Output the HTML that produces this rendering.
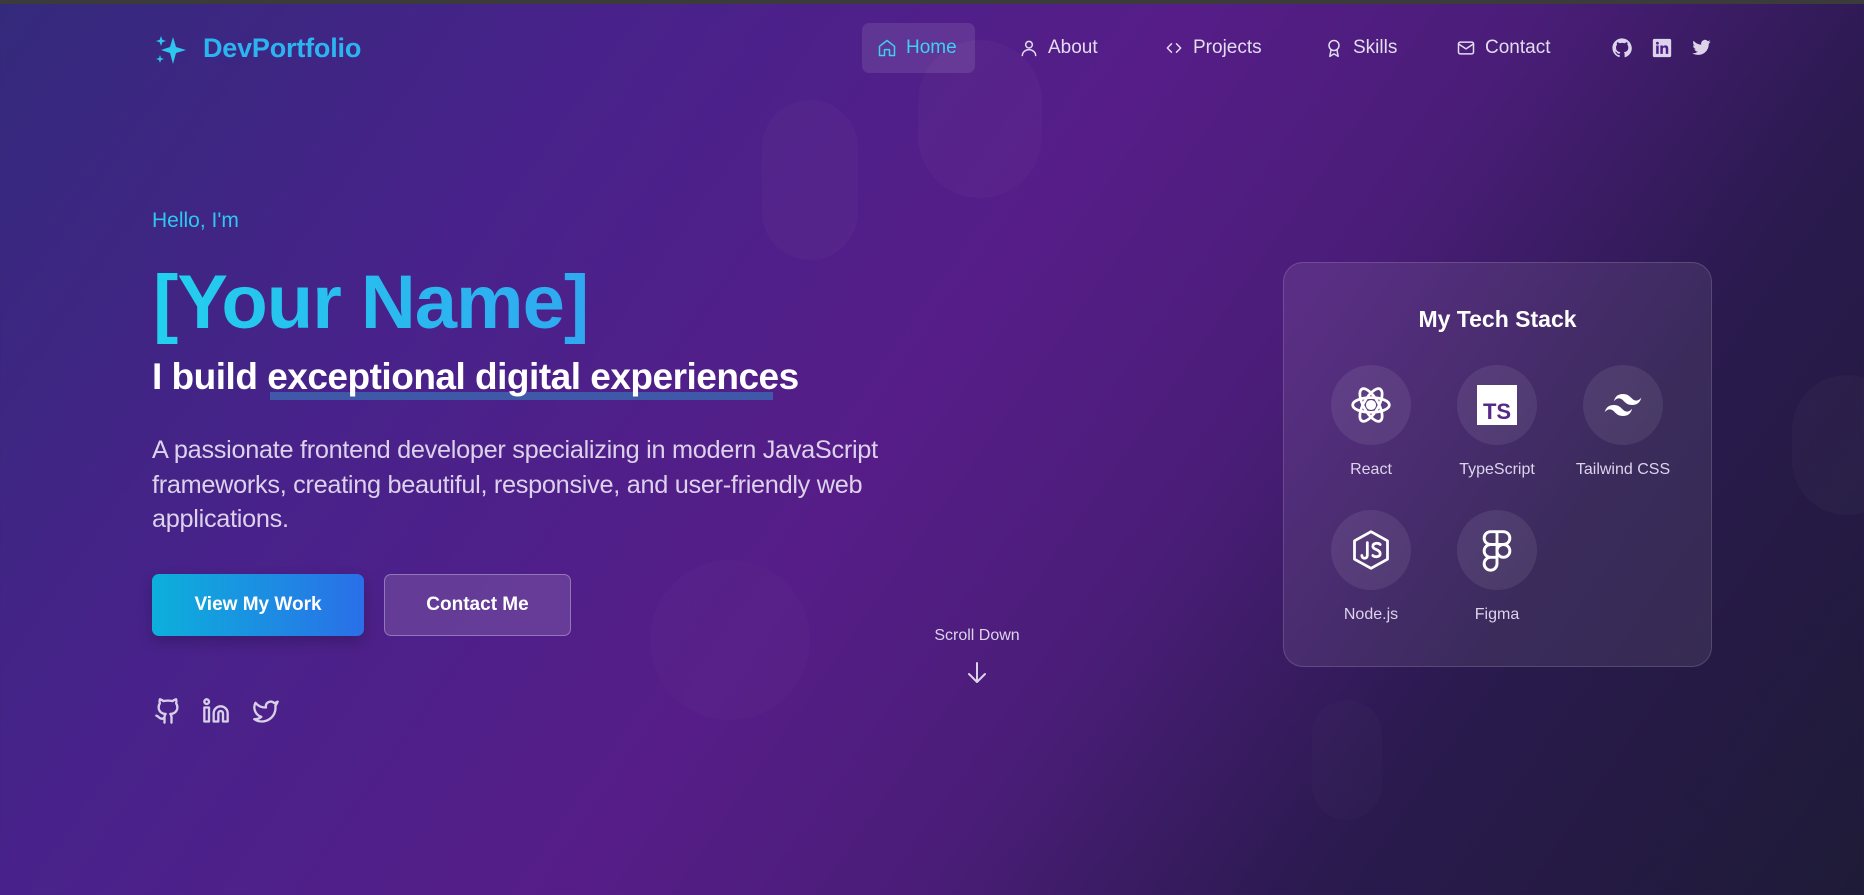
<!DOCTYPE html>
<html><head><meta charset="utf-8"><style>
*{margin:0;padding:0;box-sizing:border-box}
html,body{width:1864px;height:895px;overflow:hidden}
body{font-family:"Liberation Sans",sans-serif;position:relative;
background:linear-gradient(125deg,#342a7c 0%,#48228a 25%,#561d88 48%,#4a1d78 62%,#2a1a4e 78%,#1e1b37 100%);}
.topbar{position:absolute;left:0;top:0;width:100%;height:4px;background:#3b3b3b}
.blob{position:absolute;background:rgba(255,255,255,0.025);border-radius:999px}
.abs{position:absolute}
.nav{position:absolute;top:23px;height:50px;display:flex;align-items:center;color:#e2dcf0;font-size:19px;gap:9px}
.nav svg{width:20px;height:20px;fill:none;stroke:currentColor;stroke-width:1.8;stroke-linecap:round;stroke-linejoin:round}
.card{position:absolute;left:1283px;top:262px;width:429px;height:405px;border-radius:20px;background:rgba(255,255,255,0.08);border:1px solid rgba(255,255,255,0.14)}
.circ{position:absolute;width:80px;height:80px;border-radius:50%;background:rgba(255,255,255,0.08);display:flex;align-items:center;justify-content:center}
.circ svg{width:44px;height:44px;fill:none;stroke:#fff;stroke-width:2;stroke-linecap:round;stroke-linejoin:round}
.lbl{position:absolute;width:140px;text-align:center;color:#ddd4ec;font-size:16px}
.soc svg{width:28px;height:28px;fill:none;stroke:#d8d0e8;stroke-width:2;stroke-linecap:round;stroke-linejoin:round}
</style></head><body>
<div class="topbar"></div>
<div class="blob" style="left:762px;top:100px;width:96px;height:160px"></div>
<div class="blob" style="left:918px;top:40px;width:124px;height:158px"></div>
<div class="blob" style="left:1792px;top:375px;width:110px;height:140px"></div>
<div class="blob" style="left:650px;top:560px;width:160px;height:160px;background:rgba(255,255,255,0.015)"></div>
<div class="blob" style="left:1312px;top:700px;width:70px;height:120px;background:rgba(255,255,255,0.015)"></div>

<svg class="abs" style="left:155px;top:34px" width="32" height="32" viewBox="0 0 32 32"><path fill="#2ec5ef" d="M18 3 L21 13 L31 16 L21 19 L18 30 L15 19 L6 16 L15 13Z"/><path fill="#2ec5ef" d="M6 2 L7.3 5.7 L11 7 L7.3 8.3 L6 12 L4.7 8.3 L1 7 L4.7 5.7Z"/><path fill="#2ec5ef" d="M5 21 L6 24 L9 25 L6 26 L5 29 L4 26 L1 25 L4 24Z"/></svg>
<div class="abs" style="left:203px;top:33px;font-size:27px;font-weight:bold;color:#2bb5f0;letter-spacing:-0.2px">DevPortfolio</div>

<div class="abs" style="left:862px;top:23px;width:113px;height:50px;border-radius:7px;background:rgba(255,255,255,0.1)"></div>
<div class="nav" style="left:877px;color:#3dd0f5"><svg viewBox="0 0 24 24"><path d="M3 10 L12 3 L21 10 V21 H15 V14 H9 V21 H3Z"/></svg>Home</div>
<div class="nav" style="left:1019px"><svg viewBox="0 0 24 24"><circle cx="12" cy="8" r="4"/><path d="M4 21 c0-4 4-7 8-7 s8 3 8 7"/></svg>About</div>
<div class="nav" style="left:1164px"><svg viewBox="0 0 24 24"><path d="M9 7 L4 12 L9 17 M15 7 L20 12 L15 17"/></svg>Projects</div>
<div class="nav" style="left:1324px"><svg viewBox="0 0 24 24"><circle cx="12" cy="9" r="6"/><path d="M8.5 14 L7 22 L12 19 L17 22 L15.5 14"/></svg>Skills</div>
<div class="nav" style="left:1456px"><svg viewBox="0 0 24 24"><rect x="3" y="5" width="18" height="14" rx="2"/><path d="M3 7 L12 13 L21 7"/></svg>Contact</div>
<svg class="abs" style="left:1612px;top:38px" width="20" height="20" viewBox="0 0 24 24"><path fill="#ddd4ec" d="M12 .5C5.7.5.5 5.7.5 12c0 5.1 3.3 9.4 7.9 10.9.6.1.8-.3.8-.6v-2c-3.2.7-3.9-1.5-3.9-1.5-.5-1.3-1.300-1.7-1.3-1.7-1-.7.1-.7.1-.7 1.2.1 1.8 1.2 1.8 1.2 1 1.8 2.8 1.3 3.5 1 .1-.8.4-1.3.7-1.6-2.600-.3-5.300-1.3-5.300-5.7 0-1.3.5-2.3 1.2-3.1-.1-.3-.5-1.5.1-3.1 0 0 1-.3 3.2 1.2a11 11 0 0 1 5.800 0c2.200-1.5 3.200-1.2 3.200-1.2.6 1.6.2 2.8.1 3.1.8.8 1.2 1.9 1.2 3.1 0 4.400-2.700 5.400-5.300 5.700.4.4.8 1.100.8 2.200v3.300c0 .3.2.7.8.6 4.600-1.5 7.900-5.800 7.900-10.900C23.500 5.700 18.300.5 12 .5z"/></svg>
<svg class="abs" style="left:1652px;top:38px" width="20" height="20" viewBox="0 0 24 24"><rect x="1" y="1" width="22" height="22" rx="2" fill="#ddd4ec"/><path fill="#4a2088" d="M5 9h3v10H5zM6.5 4.5a1.7 1.7 0 1 1 0 3.4 1.7 1.7 0 0 1 0-3.4zM10 9h3v1.4c.5-.9 1.6-1.6 3.1-1.6 3 0 3.4 2 3.4 4.5V19h-3v-5c0-1.2 0-2.6-1.6-2.6S13 12.6 13 13.9V19h-3z"/></svg>
<svg class="abs" style="left:1691px;top:38px" width="21" height="20" viewBox="0 0 24 24"><path fill="#ddd4ec" d="M23 4.5c-.8.4-1.7.6-2.6.7a4.5 4.5 0 0 0 2-2.5c-.9.5-1.9.9-2.9 1.1A4.5 4.5 0 0 0 11.8 8 12.8 12.8 0 0 1 2.5 3.3a4.5 4.5 0 0 0 1.4 6 4.4 4.4 0 0 1-2-.6v.1c0 2.200 1.500 4 3.600 4.400a4.5 4.5 0 0 1-2 .1 4.5 4.5 0 0 0 4.200 3.100A9 9 0 0 1 1 18.3 12.8 12.8 0 0 0 7.9 20.3c8.3 0 12.8-6.900 12.8-12.800v-.6c.9-.6 1.6-1.4 2.3-2.4z"/></svg>

<div class="abs" style="left:152px;top:209px;font-size:21px;color:#2cc8ef">Hello, I'm</div>
<div class="abs" style="left:153px;top:260px;font-size:76px;font-weight:bold;letter-spacing:-1px;background:linear-gradient(90deg,#22d0ee,#30a8f0);-webkit-background-clip:text;color:transparent;line-height:86px">[Your Name]</div>
<div class="abs" style="left:270px;top:392px;width:503px;height:8px;background:#3f58a8"></div>
<div class="abs" style="left:152px;top:356px;font-size:37px;font-weight:bold;color:#fff;letter-spacing:-0.5px">I build exceptional digital experiences</div>
<div class="abs" style="left:152px;top:433px;width:820px;font-size:25.3px;line-height:34.5px;color:#ddd2ec;letter-spacing:-0.3px">A passionate frontend developer specializing in modern JavaScript<br>frameworks, creating beautiful, responsive, and user-friendly web<br>applications.</div>
<div class="abs" style="left:152px;top:574px;width:212px;height:62px;border-radius:7px;background:linear-gradient(90deg,#0cb0db,#2a6fe8);color:#fff;font-weight:bold;font-size:19px;display:flex;align-items:center;justify-content:center;box-shadow:0 6px 14px rgba(0,0,0,0.2)">View My Work</div>
<div class="abs" style="left:384px;top:574px;width:187px;height:62px;border-radius:7px;background:rgba(255,255,255,0.13);border:1px solid rgba(255,255,255,0.3);color:#fff;font-weight:bold;font-size:19px;display:flex;align-items:center;justify-content:center">Contact Me</div>
<div class="abs soc" style="left:154px;top:697px"><svg viewBox="0 0 24 24"><path d="M15 22v-4a4.8 4.8 0 0 0-1-3.5c3 0 6-2 6-5.5.08-1.25-.27-2.48-1-3.5.28-1.15.28-2.350 0-3.5 0 0-1 0-3 1.5-2.64-.5-5.36-.5-8 0C6 2 5 2 5 2c-.3 1.15-.3 2.35 0 3.5A5.4 5.4 0 0 0 4 9c0 3.5 3 5.5 6 5.5-.39.49-.68 1.05-.85 1.65-.17.6-.22 1.23-.15 1.85v4M9 18c-4.51 2-5-2-7-2"/></svg></div>
<div class="abs soc" style="left:202px;top:697px"><svg viewBox="0 0 24 24"><path d="M16 8a6 6 0 0 1 6 6v7h-4v-7a2 2 0 0 0-4 0v7h-4v-7a6 6 0 0 1 6-6zM2 9h4v12H2z"/><circle cx="4" cy="4" r="2"/></svg></div>
<div class="abs soc" style="left:252px;top:697px"><svg viewBox="0 0 24 24"><path d="M22 4s-.7 2.1-2 3.4c1.6 10-9.4 17.3-18 11.6 2.2.1 4.4-.6 6-2C3 15.5.5 9.6 3 5c2.2 2.6 5.6 4.1 9 4-.9-4.2 4-6.6 7-3.8 1.1 0 3-1.2 3-1.2z"/></svg></div>

<div class="abs" style="left:917px;top:627px;width:120px;text-align:center;font-size:16px;color:#ddd4ec">Scroll Down</div>
<svg class="abs" style="left:966px;top:661px" width="22" height="24" viewBox="0 0 22 24"><path d="M11 2 V21 M3 13 L11 21 L19 13" fill="none" stroke="#ddd4ec" stroke-width="2" stroke-linecap="round" stroke-linejoin="round"/></svg>

<div class="card"></div>
<div class="abs" style="left:1283px;top:306px;width:429px;text-align:center;font-size:23px;font-weight:bold;color:#fff">My Tech Stack</div>
<div class="circ" style="left:1331px;top:365px"><svg viewBox="0 0 24 24" style="stroke-width:1.5"><circle cx="12" cy="12" r="2" fill="#fff"/><ellipse cx="12" cy="12" rx="10" ry="4"/><ellipse cx="12" cy="12" rx="10" ry="4" transform="rotate(60 12 12)"/><ellipse cx="12" cy="12" rx="10" ry="4" transform="rotate(120 12 12)"/></svg></div>
<div class="circ" style="left:1457px;top:365px"><svg viewBox="0 0 40 40" style="width:40px;height:40px;stroke:none"><rect width="40" height="40" fill="#fff"/><text x="20" y="34" text-anchor="middle" font-family="Liberation Sans" font-weight="bold" font-size="22" fill="#56288a">TS</text></svg></div>
<div class="circ" style="left:1583px;top:365px"><svg viewBox="0 0 24 24" style="stroke:none;fill:#fff"><path d="M12 6c-2.7 0-4.3 1.3-5 4 1-1.3 2.2-1.8 3.5-1.5.8.2 1.3.7 1.9 1.3 1 1 2.1 2.2 4.6 2.2 2.7 0 4.3-1.3 5-4-1 1.3-2.2 1.8-3.5 1.5-.8-.2-1.3-.7-1.9-1.3C15.6 7.2 14.5 6 12 6zM7 12c-2.7 0-4.3 1.3-5 4 1-1.3 2.2-1.8 3.5-1.5.8.2 1.3.7 1.9 1.3 1 1 2.1 2.2 4.6 2.2 2.7 0 4.3-1.3 5-4-1 1.3-2.2 1.8-3.5 1.5-.8-.2-1.3-.7-1.9-1.3C10.6 13.2 9.5 12 7 12z"/></svg></div>
<div class="circ" style="left:1331px;top:510px"><svg viewBox="0 0 24 24" style="stroke-width:1.5"><path d="M12 2 L21 7 V17 L12 22 L3 17 V7Z"/><path d="M10 8 V15 C10 17 7 17 7 15"/><path d="M17 9 C16 8 13 8 13 10 C13 12 17 11.5 17 14 C17 16 14 16 13 15"/></svg></div>
<div class="circ" style="left:1457px;top:510px"><svg viewBox="0 0 24 24" style="stroke-width:1.6"><path d="M12 2H8.5a3.5 3.5 0 0 0 0 7H12zM12 2h3.5a3.5 3.5 0 0 1 0 7H12zM12 9H8.5a3.5 3.5 0 0 0 0 7H12zM12 16H8.5A3.5 3.5 0 1 0 12 19.5z"/><circle cx="15.5" cy="12.5" r="3.5"/></svg></div>
<div class="lbl" style="left:1301px;top:461px">React</div>
<div class="lbl" style="left:1427px;top:461px">TypeScript</div>
<div class="lbl" style="left:1553px;top:461px">Tailwind CSS</div>
<div class="lbl" style="left:1301px;top:606px">Node.js</div>
<div class="lbl" style="left:1427px;top:606px">Figma</div>
</body></html>
